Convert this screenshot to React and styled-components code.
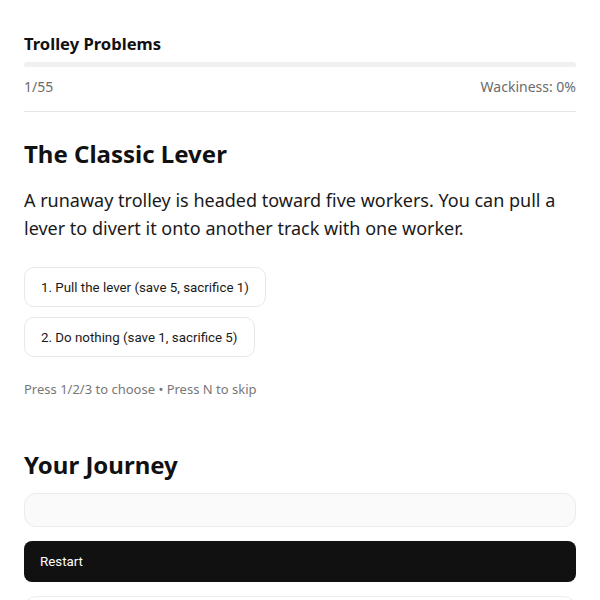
import React from 'react';
import styled, { createGlobalStyle } from 'styled-components';

const GlobalStyle = createGlobalStyle`
  html, body {
    margin: 0;
    background: #fff;
    font-family: "Noto Sans", "Open Sans", sans-serif;
    color: #111;
  }
`;

const Page = styled.div`
  padding: 32px 24px 0;
`;

const AppTitle = styled.div`
  font-size: 16.6px;
  font-weight: 700;
  line-height: 24px;
`;

const Track = styled.div`
  margin-top: 6px;
  height: 5px;
  border-radius: 3px;
  background: #f0f0f0;
  overflow: hidden;
`;

const Fill = styled.div`
  height: 100%;
  background: #111;
`;

const Stats = styled.div`
  display: flex;
  justify-content: space-between;
  margin-top: 10px;
  padding-bottom: 14px;
  border-bottom: 1px solid #e6e6e6;
  font-size: 14px;
  line-height: 20px;
  color: #6b6b6b;
`;

const Heading = styled.h2`
  margin: ${(p) => p.$top}px 0 0;
  font-size: 24px;
  font-weight: 700;
  line-height: 32px;
`;

const Prompt = styled.p`
  margin: 16px 0 0;
  font-size: 18px;
  line-height: 28px;
  color: #1a1a1a;
`;

const Choices = styled.div`
  display: flex;
  flex-direction: column;
  align-items: flex-start;
  gap: 10px;
  margin-top: 25px;
`;

const Choice = styled.button`
  height: 40px;
  padding: 0 16px;
  border: 1px solid #e8e8e8;
  border-radius: 10px;
  background: #fff;
  font-family: Roboto, "Liberation Sans", sans-serif;
  font-size: 13.333px;
  color: #1a1a1a;
  cursor: pointer;
`;

const Hint = styled.div`
  margin-top: 22px;
  font-size: 13px;
  line-height: 20px;
  color: #777;
`;

const Timeline = styled.div`
  margin-top: 12px;
  height: 34px;
  box-sizing: border-box;
  border: 1px solid #ececec;
  border-radius: 12px;
  background: #fafafa;
`;

const RestartButton = styled.button`
  display: block;
  width: 100%;
  height: 41px;
  margin-top: 14px;
  padding: 0 16px;
  border: none;
  border-radius: 8px;
  background: #111;
  color: #fff;
  text-align: left;
  font-family: Roboto, "Liberation Sans", sans-serif;
  font-size: 13.333px;
  cursor: pointer;
`;

const Panel = styled.div`
  margin-top: 14px;
  height: 60px;
  border: 1px solid #ececec;
  border-radius: 12px;
  background: #fff;
`;

const choices = [
  '1. Pull the lever (save 5, sacrifice 1)',
  '2. Do nothing (save 1, sacrifice 5)',
];

export default function App() {
  const current = 1;
  const total = 55;

  return (
    <Page>
      <GlobalStyle />
      <AppTitle>Trolley Problems</AppTitle>
      <Track>
        <Fill style={{ width: `${((current - 1) / total) * 100}%` }} />
      </Track>
      <Stats>
        <span>{current}/{total}</span>
        <span>Wackiness: 0%</span>
      </Stats>

      <Heading $top={26}>The Classic Lever</Heading>
      <Prompt>
        A runaway trolley is headed toward five workers. You can pull a lever to divert it onto
        another track with one worker.
      </Prompt>
      <Choices>
        {choices.map((c) => (
          <Choice key={c}>{c}</Choice>
        ))}
      </Choices>
      <Hint>Press 1/2/3 to choose • Press N to skip</Hint>

      <Heading $top={50}>Your Journey</Heading>
      <Timeline />
      <RestartButton>Restart</RestartButton>
      <Panel />
    </Page>
  );
}
